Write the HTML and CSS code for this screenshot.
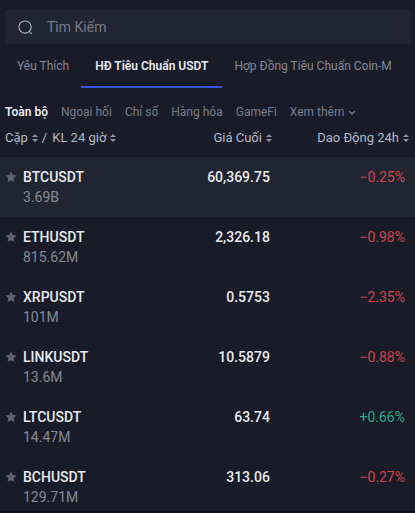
FILE: index.html
```html
<!DOCTYPE html>
<html lang="vi">
<head>
<meta charset="utf-8">
<meta name="viewport" content="width=device-width, initial-scale=1">
<title>HĐ Tiêu Chuẩn USDT</title>
<link rel="stylesheet" href="styles.css">
</head>
<body>
<svg class="defs" aria-hidden="true">
  <symbol id="star" viewBox="0 0 12 12"><path d="M6 .6 7.700 4l3.800.5-2.800 2.700.7 3.800L6 9.200 2.600 11l.7-3.800L.5 4.500 4.300 4z"/></symbol>
  <symbol id="sort" viewBox="0 0 6 8"><path d="M3 0 6 3H0zM0 5h6L3 8z"/></symbol>
</svg>
<main class="panel">
  <label class="search">
    <svg class="search-icon" viewBox="0 0 16 16" aria-hidden="true"><circle cx="7.500" cy="7.500" r="6.500"/><path d="m12.300 12.300 2.200 2.200"/></svg>
    <input type="search" placeholder="Tìm Kiếm" aria-label="Tìm Kiếm">
  </label>
  <nav class="tabs">
    <a href="#">Yêu Thích</a>
    <a href="#" class="active" aria-current="page">HĐ Tiêu Chuẩn USDT</a>
    <a href="#">Hợp Đồng Tiêu Chuẩn Coin-M</a>
  </nav>
  <div class="filters">
    <button class="active">Toàn bộ</button>
    <button>Ngoại hối</button>
    <button>Chỉ số</button>
    <button>Hàng hóa</button>
    <button>GameFi</button>
    <button>Xem thêm<svg class="chevron" viewBox="0 0 8 6" aria-hidden="true"><path d="m1 1 3 3 3-3"/></svg></button>
  </div>
  <table class="market">
    <thead>
      <tr>
        <th scope="col"><button>Cặp<svg class="sort"><use href="#sort"/></svg></button><span class="slash">/</span><button>KL 24 giờ<svg class="sort"><use href="#sort"/></svg></button></th>
        <th scope="col"><button>Giá Cuối<svg class="sort"><use href="#sort"/></svg></button></th>
        <th scope="col"><button>Dao Động 24h<svg class="sort"><use href="#sort"/></svg></button></th>
      </tr>
    </thead>
    <tbody>
      <tr class="selected"><td><div class="pair"><button aria-label="Yêu thích BTCUSDT"><svg class="star"><use href="#star"/></svg></button><span class="name">BTCUSDT</span><span class="volume">3.69B</span></div></td><td class="price">60,369.75</td><td class="down">−0.25%</td></tr>
      <tr><td><div class="pair"><button aria-label="Yêu thích ETHUSDT"><svg class="star"><use href="#star"/></svg></button><span class="name">ETHUSDT</span><span class="volume">815.62M</span></div></td><td class="price">2,326.18</td><td class="down">−0.98%</td></tr>
      <tr><td><div class="pair"><button aria-label="Yêu thích XRPUSDT"><svg class="star"><use href="#star"/></svg></button><span class="name">XRPUSDT</span><span class="volume">101M</span></div></td><td class="price">0.5753</td><td class="down">−2.35%</td></tr>
      <tr><td><div class="pair"><button aria-label="Yêu thích LINKUSDT"><svg class="star"><use href="#star"/></svg></button><span class="name">LINKUSDT</span><span class="volume">13.6M</span></div></td><td class="price">10.5879</td><td class="down">−0.88%</td></tr>
      <tr><td><div class="pair"><button aria-label="Yêu thích LTCUSDT"><svg class="star"><use href="#star"/></svg></button><span class="name">LTCUSDT</span><span class="volume">14.47M</span></div></td><td class="price">63.74</td><td class="up">+0.66%</td></tr>
      <tr><td><div class="pair"><button aria-label="Yêu thích BCHUSDT"><svg class="star"><use href="#star"/></svg></button><span class="name">BCHUSDT</span><span class="volume">129.71M</span></div></td><td class="price">313.06</td><td class="down">−0.27%</td></tr>
    </tbody>
  </table>
</main>
</body>
</html>
```
FILE: styles.css
```css
* { box-sizing: border-box; }

body {
  margin: 0;
  background: #191c28;
  color: #e8eaf0;
  font: 13px/20px Roboto, "Noto Sans", sans-serif;
}

button {
  padding: 0;
  border: 0;
  background: none;
  color: inherit;
  font: inherit;
  cursor: pointer;
}

.defs { display: none; }

.panel {
  padding-top: 10px;
  border-bottom: 2px solid #12131e;
}

.search {
  display: flex;
  align-items: center;
  gap: 14px;
  height: 34px;
  margin: 0 4px 0 5px;
  padding: 0 13px;
  border-radius: 2px;
  background: #212532;
}

.search-icon {
  flex: none;
  width: 15px;
  height: 15px;
  fill: none;
  stroke: #a9adb9;
  stroke-width: 1.2;
  stroke-linecap: round;
}

.search input {
  flex: 1;
  min-width: 0;
  padding: 0;
  border: 0;
  outline: 0;
  background: none;
  color: #e8eaf0;
  font: inherit;
  font-size: 14px;
}

.search input::placeholder { color: #777a85; opacity: 1; }

.tabs {
  display: flex;
  padding: 0 5px;
  font-size: 12px;
  white-space: nowrap;
}

.tabs a {
  padding: 12px 12px 10px;
  border-bottom: 2px solid transparent;
  color: #858995;
  text-decoration: none;
}

.tabs .active {
  padding-right: 14px;
  padding-left: 14px;
  border-color: #3055e8;
  color: #e8eaf0;
  font-weight: 600;
}

.filters {
  display: flex;
  gap: 13px;
  padding: 14px 5px 6px;
  color: #777b88;
  font-size: 12px;
  white-space: nowrap;
}

.filters .active { color: #e8eaf0; font-weight: 600; }

.chevron {
  width: 8px;
  height: 6px;
  margin-left: 3px;
  fill: none;
  stroke: currentColor;
  stroke-width: 1.3;
}

.market {
  width: 100%;
  border-collapse: collapse;
  table-layout: fixed;
}

.market th {
  padding: 0 2px 9px 0;
  color: #b4bac8;
  font-weight: 400;
  text-align: right;
  white-space: nowrap;
}

.market th:first-child { width: 36%; padding-left: 5px; text-align: left; }
.market th:nth-child(2) { width: 30%; }
.market th:last-child { padding-right: 6px; }

.slash { margin: 0 5px 0 4px; }

.sort {
  width: 6px;
  height: 8px;
  margin-left: 4px;
  fill: #8f95a3;
}

.market td {
  padding: 10px 4px 10px 0;
  font-size: 14px;
  text-align: right;
  vertical-align: top;
}

.market td:first-child { padding-left: 5px; text-align: left; }
.market td:last-child { padding-right: 10px; }
.market tbody tr:last-child td { padding-bottom: 4px; }

.selected { background: #212532; }

.pair {
  display: grid;
  grid-template-columns: 12px 1fr;
  column-gap: 6px;
}

.pair button { display: flex; align-items: center; }

.star {
  width: 12px;
  height: 12px;
  fill: #5d6472;
}

.name { font-weight: 500; }
.volume { grid-column: 2; color: #858995; }
.market .price { font-weight: 500; }
.down { color: #d3434d; }
.up { color: #25a983; }
```
